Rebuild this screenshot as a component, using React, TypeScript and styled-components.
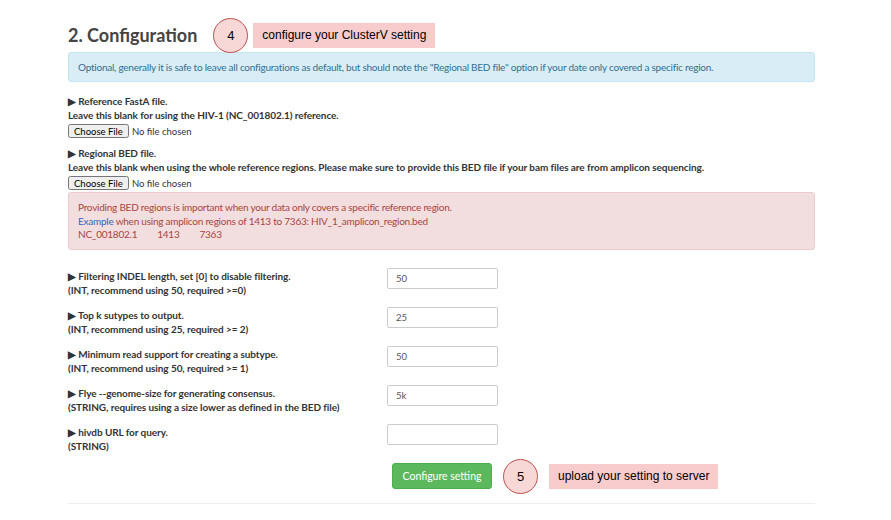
import React from 'react';
import styled, { createGlobalStyle } from 'styled-components';

const GlobalStyle = createGlobalStyle`
  html, body {
    margin: 0;
    padding: 0;
    background: #ffffff;
  }
  body {
    font-family: Lato, 'Open Sans', sans-serif;
    color: #333333;
  }
`;

const fields = [
  { title: 'Filtering INDEL length, set [0] to disable filtering.', hint: '(INT, recommend using 50, required >=0)', value: '50' },
  { title: 'Top k sutypes to output.', hint: '(INT, recommend using 25, required >= 2)', value: '25' },
  { title: 'Minimum read support for creating a subtype.', hint: '(INT, recommend using 50, required >= 1)', value: '50' },
  { title: 'Flye --genome-size for generating consensus.', hint: '(STRING, requires using a size lower as defined in the BED file)', value: '5k' },
  { title: 'hivdb URL for query.', hint: '(STRING)', value: '' },
];

const App = () => {
  return (
    <>
      <GlobalStyle />
      <Page>
        <HeadingRow>
          <Heading>2. Configuration</Heading>
          <StepCircle>4</StepCircle>
          <StepNote $gap={5}>configure your ClusterV setting</StepNote>
        </HeadingRow>

        <InfoAlert>
          Optional, generally it is safe to leave all configurations as default, but should note the "Regional BED file" option if your date only covered a specific region.
        </InfoAlert>

        <FileGroup>
          <Label>▶ Reference FastA file.</Label>
          <Label>Leave this blank for using the HIV-1 (NC_001802.1) reference.</Label>
          <FileInput type="file" />
        </FileGroup>

        <FileGroup>
          <Label>▶ Regional BED file.</Label>
          <Label>
            Leave this blank when using the whole reference regions. Please make sure to provide this BED file if your bam files are from amplicon sequencing.
          </Label>
          <FileInput type="file" />
        </FileGroup>

        <DangerAlert>
          <div>Providing BED regions is important when your data only covers a specific reference region.</div>
          <div>
            <ExampleLink>Example</ExampleLink> when using amplicon regions of 1413 to 7363: HIV_1_amplicon_region.bed
          </div>
          <BedLine>
            <span>NC_001802.1</span>
            <span>1413</span>
            <span>7363</span>
          </BedLine>
        </DangerAlert>

        <FieldList>
          {fields.map((f) => (
            <FieldRow key={f.title}>
              <div>
                <Label>▶ {f.title}</Label>
                <Label>{f.hint}</Label>
              </div>
              <TextInput defaultValue={f.value} />
            </FieldRow>
          ))}
        </FieldList>

        <SubmitRow>
          <SubmitButton>Configure setting</SubmitButton>
          <StepCircle>5</StepCircle>
          <StepNote $gap={0}>upload your setting to server</StepNote>
        </SubmitRow>

        <Divider />
      </Page>
    </>
  );
};

const Page = styled.div`
  width: 747px;
  padding: 22px 0 0 68px;
`;

const HeadingRow = styled.div`
  display: flex;
  align-items: center;
  height: 26px;
`;

const Heading = styled.h2`
  margin: 0 16px 0 0;
  font-size: 18px;
  font-weight: 700;
  color: #444444;
  line-height: 26px;
`;

const StepCircle = styled.div`
  width: 35px;
  height: 35px;
  box-sizing: border-box;
  border-radius: 50%;
  border: 1px solid #c0504d;
  background: #f8d7d7;
  display: flex;
  align-items: center;
  justify-content: center;
  font-family: 'Liberation Sans', Arial, sans-serif;
  font-size: 13px;
  color: #000000;
  flex-shrink: 0;
`;

const StepNote = styled.div<{ $gap: number }>`
  margin-left: ${({ $gap }) => $gap}px;
  background: #f8cccc;
  padding: 0 9px;
  height: 25px;
  line-height: 25px;
  font-family: 'Liberation Sans', Arial, sans-serif;
  font-size: 12px;
  color: #000000;
`;

const InfoAlert = styled.div`
  margin-top: 4px;
  background: #d9edf7;
  border: 1px solid #c4e6f2;
  border-radius: 3px;
  color: #31708f;
  font-size: 10px;
  letter-spacing: -0.24px;
  line-height: 14px;
  padding: 7px 9px;
`;

const FileGroup = styled.div`
  margin-top: 12px;
  & + & {
    margin-top: 7px;
  }
`;

const Label = styled.div`
  font-size: 10px;
  font-weight: 700;
  letter-spacing: -0.08px;
  line-height: 14px;
  color: #333333;
`;

const FileInput = styled.input`
  display: block;
  margin-top: 2px;
  height: 15px;
  font-family: Lato, 'Open Sans', sans-serif;
  font-size: 9.5px;
  color: #333333;

  &::file-selector-button {
    font-family: Lato, 'Open Sans', sans-serif;
    font-size: 9.5px;
    padding: 0 4px;
    margin-right: 3px;
    height: 14px;
  }
`;

const DangerAlert = styled.div`
  margin-top: 1px;
  background: #f2dede;
  border: 1px solid #ebccd1;
  border-radius: 3px;
  color: #a94442;
  font-size: 10px;
  letter-spacing: -0.24px;
  line-height: 13.5px;
  padding: 8px 9px 7px;
`;

const ExampleLink = styled.span`
  color: #3b5ec7;
`;

const BedLine = styled.div`
  display: flex;
  gap: 20px;
`;

const FieldList = styled.div`
  margin-top: 19px;
  display: flex;
  flex-direction: column;
  gap: 11px;
`;

const FieldRow = styled.div`
  display: grid;
  grid-template-columns: 319px 111px;
  align-items: start;
`;

const TextInput = styled.input`
  box-sizing: border-box;
  width: 111px;
  height: 21px;
  margin-top: -1px;
  border: 1px solid #cccccc;
  border-radius: 2px;
  padding: 0 8px;
  font-family: Lato, 'Open Sans', sans-serif;
  font-size: 9.5px;
  color: #555555;
`;

const SubmitRow = styled.div`
  margin-top: 6px;
  padding-left: 324px;
  display: flex;
  align-items: center;
  gap: 11px;
`;

const SubmitButton = styled.button`
  width: 100px;
  height: 26px;
  border: 1px solid #4cae4c;
  border-radius: 3px;
  background: #5cb85c;
  color: #ffffff;
  font-family: Lato, 'Open Sans', sans-serif;
  font-size: 10.5px;
  padding: 0;
`;

const Divider = styled.hr`
  margin: 9px 0 0;
  border: 0;
  border-top: 1px solid #eeeeee;
`;

export default App;
